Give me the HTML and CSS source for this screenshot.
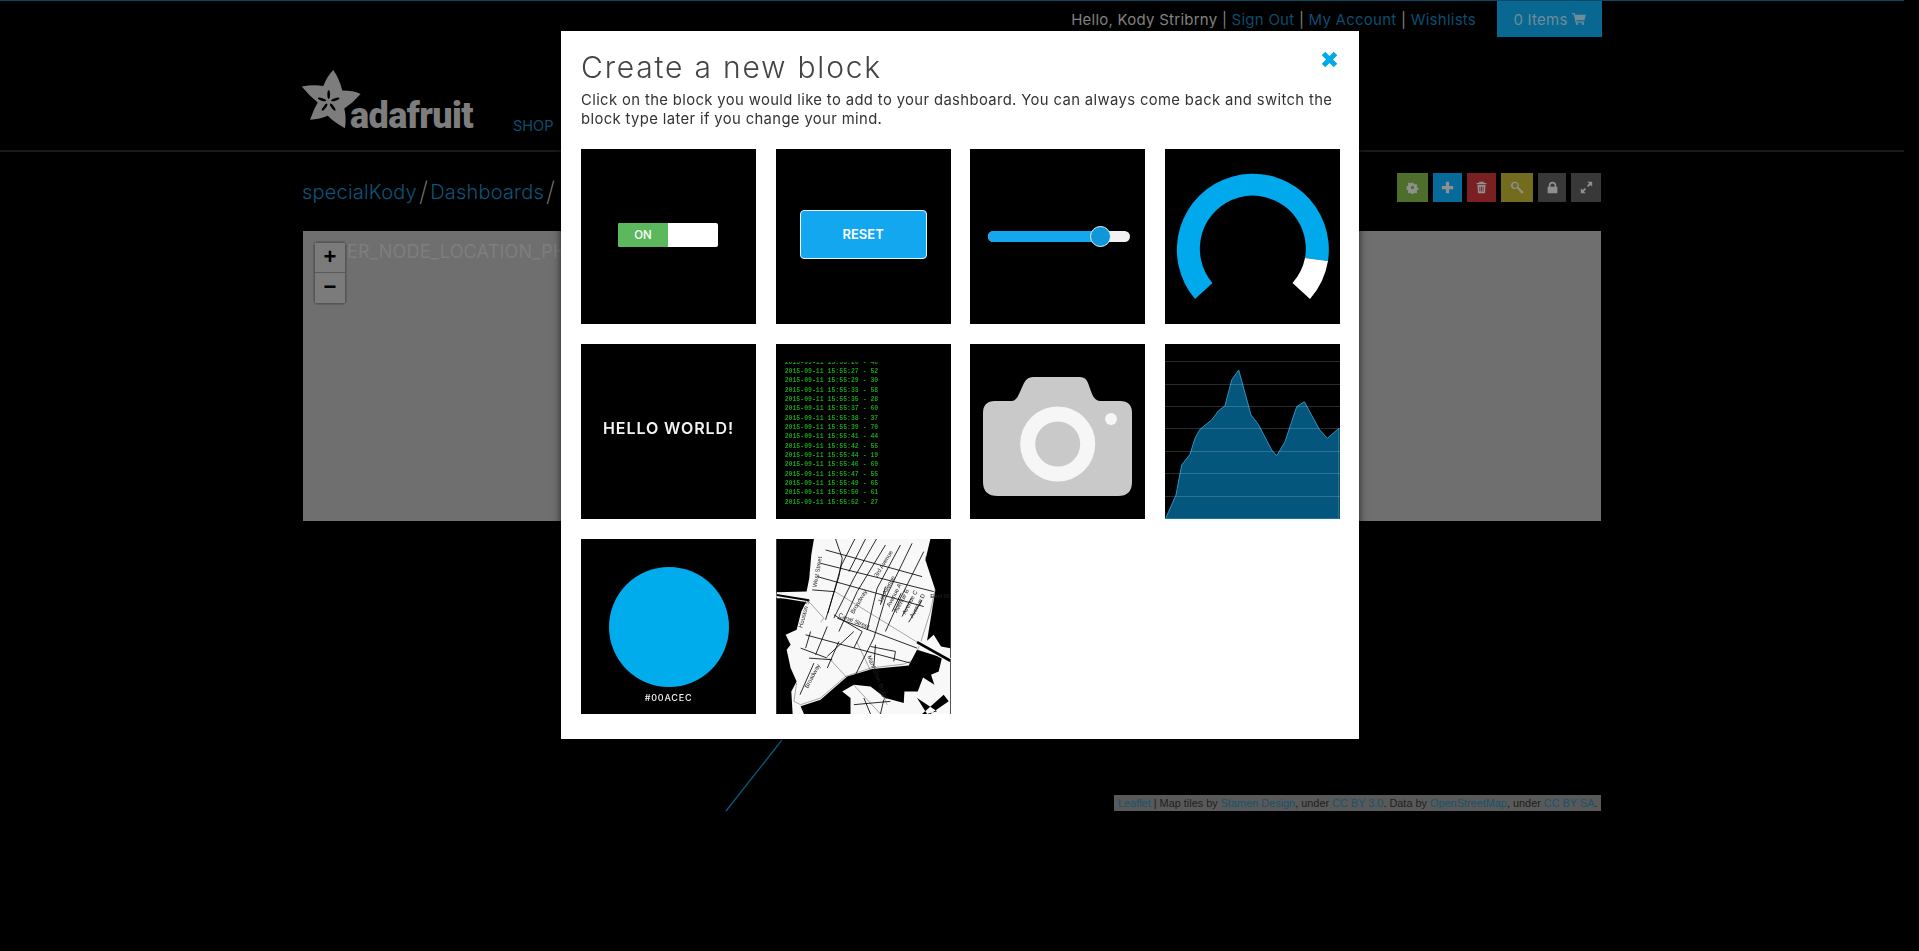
FILE: index.html
```html
<!DOCTYPE html>
<html>
<head>
    <title>Create a new block</title>
    <link rel="stylesheet" href="styles.css">
</head>
<body>
    <div class="page">
        <div class="wrap">
            <div class="topbar">
                <span class="hello">Hello, Kody Stribrny | <a>Sign Out</a> | <a>My Account</a> | <a>Wishlists</a></span>
                <a class="cart">0 Items
                    <svg class="cart-icon" viewBox="0 0 16 14"><path d="M0 0h3l.5 2H16l-1.500 6.500H5l.4 1.500H14v1.400H4L1.900 1.400H0z"/><circle cx="5.500" cy="12.700" r="1.300"/><circle cx="12.500" cy="12.700" r="1.300"/></svg>
                </a>
            </div>
            <div class="masthead">
                <div class="logo">
                    <svg class="logo-star" viewBox="0 0 210 215">
                        <path d="M115 30Q135 60 142 92Q175 92 197 102Q175 128 148 146Q155 175 150 205Q120 190 98 168Q75 178 45 180Q55 150 68 128Q40 105 20 80Q55 73 85 78Q95 50 115 30Z"/>
                        <g class="logo-seeds">
                            <ellipse cx="101" cy="104" rx="4" ry="13"/>
                            <ellipse cx="101" cy="104" rx="4" ry="13" transform="rotate(72 101 125)"/>
                            <ellipse cx="101" cy="104" rx="4" ry="13" transform="rotate(144 101 125)"/>
                            <ellipse cx="101" cy="104" rx="4" ry="13" transform="rotate(216 101 125)"/>
                            <ellipse cx="101" cy="104" rx="4" ry="13" transform="rotate(288 101 125)"/>
                        </g>
                    </svg>
                    <span class="logo-text">adafruit</span>
                </div>
                <a class="nav-link">SHOP</a>
            </div>
        </div>
        <div class="rule"></div>
        <div class="wrap">
            <div class="titlebar">
                <div class="crumbs"><a>specialKody</a><span class="slash">/</span><a>Dashboards</a><span class="slash">/</span></div>
                <div class="tools">
                    <a class="tool tool-green"><svg viewBox="0 0 16 16"><path d="M6.600 1h2.800l.4 2 1.500.7 1.800-1.100 2 2-1.100 1.800.6 1.500 2 .4v2.800l-2 .4-.6 1.500 1.100 1.800-2 2-1.800-1.100-1.500.6-.4 2H6.600l-.4-2-1.500-.6-1.800 1.100-2-2 1.100-1.800-.6-1.500-2-.4V6.300l2-.4.6-1.500-1.100-1.800 2-2 1.800 1.100 1.500-.7zM8 5.600a2.400 2.400 0 1 0 0 4.800 2.400 2.400 0 0 0 0-4.800z" transform="translate(1.200 1.200) scale(.85)"/></svg></a>
                    <a class="tool tool-blue"><svg viewBox="0 0 16 16"><path d="M6 1h4v5h5v4h-5v5H6v-5H1V6h5z"/></svg></a>
                    <a class="tool tool-red"><svg viewBox="0 0 16 16"><path d="M5.500 1h5l1 1.500H14V4H2V2.500h2.500zM3 5h10l-.7 10H3.700zM5.500 7v6h1V7zm2 0v6h1V7zm2 0v6h1V7z"/></svg></a>
                    <a class="tool tool-olive"><svg viewBox="0 0 16 16"><path d="M5 1a4.500 4.500 0 0 1 4 6.500l6 5.500v2h-2.500l-1-1v-1.500H10V11.300L7.300 9A4.500 4.500 0 1 1 5 1zm0 1.500a3 3 0 1 0 0 6 3 3 0 0 0 0-6z"/></svg></a>
                    <a class="tool tool-gray tool-lock"><svg viewBox="0 0 16 16"><path d="M8 1a4.500 4.500 0 0 1 4.500 4.500V7H14v8H2V7h1.500V5.500A4.500 4.500 0 0 1 8 1zm0 2a2.500 2.500 0 0 0-2.500 2.500V7h5V5.500A2.500 2.500 0 0 0 8 3z"/></svg></a>
                    <a class="tool tool-gray"><svg viewBox="0 0 16 16"><path d="M9 1h6v6l-2.200-2.200-2.700 2.700-1.600-1.600 2.700-2.700zM5.900 8.500l1.600 1.600-2.700 2.700L7 15H1V9l2.200 2.200z"/></svg></a>
                </div>
            </div>
            <div class="map">
                <span class="map-label">ER_NODE_LOCATION_PHOTO</span>
                <div class="zoom-control">
                    <a class="zoom-btn">+</a>
                    <a class="zoom-btn">&minus;</a>
                </div>
            </div>
            <div class="attribution"><a>Leaflet</a> | Map tiles by <a>Stamen Design</a>, under <a>CC BY 3.0</a>. Data by <a>OpenStreetMap</a>, under <a>CC BY SA</a>.</div>
        </div>
        <svg class="map-line" viewBox="0 0 80 100"><line x1="79" y1="1" x2="23" y2="72"/></svg>
    </div>

    <div class="overlay">
        <div class="modal">
            <a class="close"><svg viewBox="0 0 17 17"><path d="M2.500 2.500l12 12M14.500 2.500l-12 12"/></svg></a>
            <h1>Create a new block</h1>
            <p>Click on the block you would like to add to your dashboard. You can always come back and switch the block type later if you change your mind.</p>
            <div class="tiles">
                <div class="tile tile-center">
                    <div class="toggle"><span class="toggle-on">ON</span></div>
                </div>
                <div class="tile tile-center">
                    <div class="reset">RESET</div>
                </div>
                <div class="tile tile-center">
                    <div class="slider"><span class="slider-fill"></span><span class="slider-knob"></span></div>
                </div>
                <div class="tile">
                    <svg class="tile-art" viewBox="0 0 175 175">
                        <path fill="#00a9ec" d="M47.500 134L30 150A76 76 0 1 1 163 112L140 109A53 53 0 1 0 47.500 134Z"/>
                        <path fill="#fff" d="M163 112A76 76 0 0 1 145 150L127.500 134A53 53 0 0 0 140 109Z"/>
                    </svg>
                </div>
                <div class="tile tile-center">
                    <span class="hello-world">HELLO WORLD!</span>
                </div>
                <div class="tile">
                    <div class="log">
                        <div>2015-09-11 15:55:26 - 40</div>
                        <div>2015-09-11 15:55:27 - 52</div>
                        <div>2015-09-11 15:55:29 - 30</div>
                        <div>2015-09-11 15:55:33 - 58</div>
                        <div>2015-09-11 15:55:35 - 28</div>
                        <div>2015-09-11 15:55:37 - 60</div>
                        <div>2015-09-11 15:55:38 - 37</div>
                        <div>2015-09-11 15:55:39 - 70</div>
                        <div>2015-09-11 15:55:41 - 44</div>
                        <div>2015-09-11 15:55:42 - 55</div>
                        <div>2015-09-11 15:55:44 - 19</div>
                        <div>2015-09-11 15:55:46 - 69</div>
                        <div>2015-09-11 15:55:47 - 55</div>
                        <div>2015-09-11 15:55:49 - 65</div>
                        <div>2015-09-11 15:55:50 - 61</div>
                        <div>2015-09-11 15:55:52 - 27</div>
                    </div>
                </div>
                <div class="tile">
                    <svg class="tile-art" viewBox="0 0 175 175">
                        <path fill="#c9c9c9" d="M25 57H42Q46 57 49 50L54 39Q57 33 63 33H110Q116 33 118 39L122 50Q125 57 130 57H150Q162 57 162 69V138Q162 152 148 152H28Q13 152 13 138V69Q13 57 25 57Z"/>
                        <circle cx="87.700" cy="100" r="30" fill="none" stroke="#f6f6f6" stroke-width="15"/>
                        <circle cx="141" cy="75" r="6" fill="#f6f6f6"/>
                    </svg>
                </div>
                <div class="tile">
                    <svg class="tile-art" viewBox="0 0 175 175">
                        <path class="chart-area" d="M.7 174.300L11 151 16.700 121 25 110.300 30 94.300 35 85.300 46.700 76 53.300 67 60 61.700 66.700 36 73.700 26 86 71 93.300 80.300 106.700 106 111.700 111.700 120 97.700 131.700 62.700 139.300 57.700 154.300 85.300 162.300 94.300 174 84.300V175H.7Z"/>
                        <g class="chart-grid">
                            <line x1="0" y1="17.500" x2="175" y2="17.500"/>
                            <line x1="0" y1="40.500" x2="175" y2="40.500"/>
                            <line x1="0" y1="62.500" x2="175" y2="62.500"/>
                            <line x1="0" y1="84.500" x2="175" y2="84.500"/>
                            <line x1="0" y1="107.500" x2="175" y2="107.500"/>
                            <line x1="0" y1="129.500" x2="175" y2="129.500"/>
                            <line x1="0" y1="152.500" x2="175" y2="152.500"/>
                        </g>
                    </svg>
                </div>
                <div class="tile tile-color">
                    <span class="color-circle"></span>
                    <span class="color-name">#00ACEC</span>
                </div>
                <div class="tile tile-map">
                    <svg class="tile-art" viewBox="18 12 522 526">
                        <rect x="18" y="12" width="522" height="526" fill="#f8f8f8"/>
                        <g fill="#000">
                            <path d="M18 12H130L122 60 116 130 108 170 18 172Z"/>
                            <path d="M18 190H112L92 230 78 285 45 300 60 330 48 345 60 400 78 440 62 470 66 538H18Z"/>
                            <path d="M480 12H540V340L512 335 490 300 470 318 478 270 495 165 465 75Z"/>
                            <path d="M440 345L515 368 505 410 482 420 492 450 458 428 442 470 402 470 400 505 345 490 300 455 250 450 215 470 240 490 240 538H100L90 515 150 495 230 425 305 403 415 392Z"/>
                            <path d="M440 490L500 530 470 538ZM520 480L455 538H480L535 500Z"/>
                        </g>
                        <g class="streets">
                            <path d="M195 12L215 70 205 125 165 255"/>
                            <path d="M253 12L213 90 172 235"/>
                            <path d="M285 12L235 110"/>
                            <path d="M318 12L250 130 190 250"/>
                            <path d="M345 30L260 170 205 290"/>
                            <path d="M390 30L320 160 290 285"/>
                            <path d="M425 25L345 190 310 310 255 420"/>
                            <path d="M460 50L390 190 345 290"/>
                            <path d="M165 45L455 125"/>
                            <path d="M150 85L490 170"/>
                            <path d="M140 125L460 215"/>
                            <path d="M125 165L190 170"/>
                            <path d="M345 155L330 210"/>
                            <path d="M392 175L365 230"/>
                            <path d="M422 190L395 245"/>
                            <path d="M455 195L415 262"/>
                            <path d="M200 250L440 340"/>
                            <path d="M190 240L275 290 250 340"/>
                            <path d="M105 300L420 385"/>
                            <path d="M90 340L170 370"/>
                            <path d="M120 290L105 340"/>
                            <path d="M170 275L135 360"/>
                            <path d="M250 290L170 365"/>
                            <path d="M205 320L170 400"/>
                            <path d="M300 335L375 350 370 380"/>
                            <path d="M315 330L310 395"/>
                            <path d="M115 370L185 375"/>
                            <path d="M130 385L88 480"/>
                            <path d="M250 510L360 500M280 490L300 538M340 495L330 538"/>
                        </g>
                        <g class="roads">
                            <path d="M190 168L440 322" stroke-width="5"/>
                            <path d="M175 370L330 538" stroke-width="7"/>
                            <path d="M258 320L350 510" stroke-width="6"/>
                            <path d="M110 195L160 250 150 262" stroke-width="5"/>
                            <path d="M465 65L495 160 480 230 450 325 430 375 400 388 300 400 225 425 150 490 90 510 70 500 78 445" stroke-width="6"/>
                        </g>
                        <g class="highway">
                            <path d="M18 180L115 196" stroke-width="14"/>
                            <path d="M440 322L540 378" stroke-width="14"/>
                            <path class="highway-core" d="M18 180L115 196" stroke-width="6"/>
                            <path class="highway-core" d="M440 322L540 378" stroke-width="8"/>
                        </g>
                        <g class="map-names">
                            <text transform="translate(138 158) rotate(-80)">West Street</text>
                            <text transform="translate(320 128) rotate(-58)">3rd Avenue</text>
                            <text transform="translate(333 205) rotate(-62)">1st Avenue</text>
                            <text transform="translate(358 218) rotate(-62)">Avenue A</text>
                            <text transform="translate(380 235) rotate(-62)">Avenue B</text>
                            <text transform="translate(405 240) rotate(-62)">Avenue C</text>
                            <text transform="translate(428 250) rotate(-62)">Avenue D</text>
                            <text transform="translate(480 190)">East Ri</text>
                            <text transform="translate(95 280) rotate(-75)">Houston St</text>
                            <text transform="translate(250 238) rotate(-60)">Broadway</text>
                            <text transform="translate(202 245) rotate(22)">Canal Street</text>
                            <text transform="translate(112 462) rotate(-62)">Broadway</text>
                            <text transform="translate(290 365) rotate(68)">Manhattan Bridge</text>
                        </g>
                    </svg>
                </div>
            </div>
        </div>
    </div>
</body>
</html>
```

FILE: styles.css
```css
* {
    box-sizing: border-box;
}

html, body {
    margin: 0;
    height: 100%;
    background: #000;
    overflow: hidden;
}

body {
    font-family: "Inter", "Liberation Sans", sans-serif;
}

/* page behind the dialog, already dimmed */
.page {
    position: relative;
    width: 1904px;
    height: 951px;
    border-top: 1px solid #0b4a66;
}

.wrap {
    width: 1298px;
    margin: 0 auto;
}

.topbar {
    display: flex;
    justify-content: flex-end;
    height: 36px;
    font-size: 15px;
    letter-spacing: 0.25px;
}

.hello {
    margin-right: 21px;
    line-height: 38px;
    color: #838383;
}

.hello a {
    color: #0c4e70;
}

.cart {
    display: flex;
    align-items: center;
    justify-content: center;
    gap: 4px;
    width: 105px;
    margin-right: -1px;
    background: #086891;
    color: #6f8c99;
}

.cart-icon {
    width: 14px;
    height: 12px;
    fill: #6f8c99;
}

.masthead {
    display: flex;
    height: 113px;
}

.logo {
    display: flex;
    align-items: flex-end;
    width: 180px;
    height: 71.500px;
    margin: 23px 0 0 -8px;
}

.logo-star {
    flex: none;
    width: 70px;
    height: 71.500px;
    fill: #7d7d7d;
}

.logo-seeds {
    fill: #000;
}

.logo-text {
    margin: 0 0 -5px -15px;
    font-family: "Roboto", sans-serif;
    font-size: 36px;
    font-weight: 900;
    letter-spacing: -0.6px;
    color: #7d7d7d;
}

.nav-link {
    margin: 80px 0 0 38px;
    font-size: 14.500px;
    color: #0c4e70;
}

.rule {
    height: 2px;
    background: #1a1a1a;
}

.titlebar {
    display: flex;
    justify-content: space-between;
    align-items: center;
    height: 29px;
    margin: 21px 0 29px;
}

.crumbs {
    display: flex;
    align-items: center;
    margin-left: -1px;
    padding-top: 8px;
    font-size: 20px;
    font-weight: 300;
    letter-spacing: 0.2px;
    color: #0d5479;
}

.slash {
    margin: 0 2px;
    font-size: 27px;
    font-weight: 200;
    color: #7a7a7a;
}

.tools {
    display: flex;
    gap: 5px;
}

.tool {
    display: flex;
    align-items: center;
    justify-content: center;
    width: 30px;
    height: 29px;
}

.tool svg {
    width: 13px;
    height: 13px;
    fill: #8f8f8f;
}

.tool-green { width: 31px; background: #4d6f2b; }
.tool-blue { width: 29px; background: #066a9b; }
.tool-red { width: 29px; background: #7b2022; }
.tool-olive { width: 32px; background: #736c1f; }
.tool-gray { background: #383838; }
.tool-lock { width: 28px; }

.map {
    position: relative;
    height: 290px;
    padding: 10px 0 0 44px;
    background: #6f6f6f;
}

.map-label {
    font-size: 18px;
    letter-spacing: 0.2px;
    color: #7e7e7e;
}

.zoom-control {
    position: absolute;
    top: 11px;
    left: 11px;
    width: 32px;
    border: 1px solid #565656;
    border-radius: 4px;
    background: #6f6f6f;
    box-shadow: 0 0 0 1px #5f5f5f;
}

.zoom-btn {
    display: block;
    height: 30px;
    border-bottom: 1px solid #5a5a5a;
    background: #7b7b7b;
    font-family: "Liberation Sans", sans-serif;
    font-size: 22px;
    font-weight: bold;
    line-height: 28px;
    text-align: center;
    color: #000;
}

.zoom-btn:last-child {
    border-bottom: none;
}

.attribution {
    width: 487px;
    height: 16px;
    margin: 274px 0 0 auto;
    padding-left: 4px;
    background: #595959;
    font-family: "Liberation Sans", sans-serif;
    font-size: 10.900px;
    line-height: 16px;
    white-space: nowrap;
    color: #1e1e1e;
}

.attribution a {
    color: #17536e;
}

.map-line {
    position: absolute;
    top: 738px;
    left: 703px;
    width: 80px;
    height: 100px;
}

.map-line line {
    stroke: #0b5a80;
    stroke-width: 1.300;
}

/* dialog */
.overlay {
    position: fixed;
    top: 0;
    right: 0;
    bottom: 0;
    left: 0;
    display: flex;
    justify-content: center;
    align-items: flex-start;
    padding: 31px 0 0 1px;
}

.modal {
    position: relative;
    width: 798px;
    height: 708px;
    padding: 20px 19px 20px 20px;
    background: #fff;
    box-shadow: 0 0 8px rgba(0, 0, 0, 0.7);
}

.close {
    position: absolute;
    top: 20px;
    right: 21px;
    width: 17px;
    height: 17px;
}

.close svg {
    display: block;
    fill: none;
    stroke: #00a9e8;
    stroke-width: 5;
}

.modal h1 {
    margin: -2px 0 0;
    font-size: 30px;
    font-weight: 300;
    line-height: 36px;
    letter-spacing: 1.800px;
    color: #444;
}

.modal p {
    margin: 6px 0 20px;
    font-size: 14.800px;
    line-height: 19px;
    letter-spacing: 0.380px;
    color: #333;
}

.tiles {
    display: grid;
    grid-template-columns: repeat(4, 175px);
    justify-content: space-between;
    row-gap: 20px;
}

.tile {
    position: relative;
    width: 175px;
    height: 175px;
    overflow: hidden;
    background: #000;
}

.tile-center {
    display: flex;
    align-items: center;
    justify-content: center;
}

.tile-art {
    display: block;
    width: 175px;
    height: 175px;
}

.toggle {
    display: flex;
    width: 100px;
    height: 24px;
    margin: -3px 0 0 -1px;
    border-radius: 2px;
    background: #fff;
    overflow: hidden;
}

.toggle-on {
    width: 50px;
    background: #5cb85c;
    font-size: 11.500px;
    font-weight: 500;
    line-height: 24px;
    text-align: center;
    color: #fff;
}

.reset {
    width: 127px;
    height: 49px;
    margin-top: -4px;
    border: 1px solid #e6f4fc;
    border-radius: 4px;
    background: #12a7ef;
    font-size: 13px;
    font-weight: 600;
    line-height: 47px;
    text-align: center;
    color: #fff;
}

.slider {
    position: relative;
    width: 142px;
    height: 11px;
    margin: -1px 0 0 3px;
    border-radius: 6px;
    background: #f2f2f2;
}

.slider-fill {
    display: block;
    width: 112px;
    height: 11px;
    border-radius: 6px 0 0 6px;
    background: #12a7ef;
}

.slider-knob {
    position: absolute;
    top: -5px;
    left: 102px;
    width: 21px;
    height: 21px;
    border: 1px solid #e6f4fc;
    border-radius: 50%;
    background: #0f97da;
}

.hello-world {
    margin-top: -8px;
    font-size: 16px;
    font-weight: 600;
    letter-spacing: 0.900px;
    color: #f2f2f2;
}

.log {
    height: 157px;
    margin-top: 18px;
    padding-left: 9px;
    overflow: hidden;
    font-family: "Liberation Mono", monospace;
    font-size: 6.500px;
    font-weight: bold;
    line-height: 9.330px;
    white-space: nowrap;
    color: #1a9e1a;
}

.log div:first-child {
    margin-top: -4.300px;
}

.chart-grid line {
    stroke: rgba(255, 255, 255, 0.17);
    stroke-width: 1;
}

.chart-area {
    fill: #05567c;
    stroke: #2a95c0;
    stroke-width: 1;
}

.tile-color {
    display: flex;
    flex-direction: column;
    align-items: center;
    padding-top: 28px;
}

.color-circle {
    width: 120px;
    height: 120px;
    border-radius: 50%;
    background: #00acec;
}

.color-name {
    margin-top: 5px;
    font-size: 9px;
    font-weight: 500;
    letter-spacing: 0.800px;
    color: #f2f2f2;
}

.streets path,
.roads path {
    fill: none;
    stroke: #000;
    stroke-width: 2.500;
}

.roads path {
    stroke-width: inherit;
}

.highway path {
    fill: none;
    stroke: #f8f8f8;
}

.highway .highway-core {
    stroke: #000;
}

.map-names {
    font-family: "Liberation Sans", sans-serif;
    font-size: 18px;
    fill: #222;
}
```
